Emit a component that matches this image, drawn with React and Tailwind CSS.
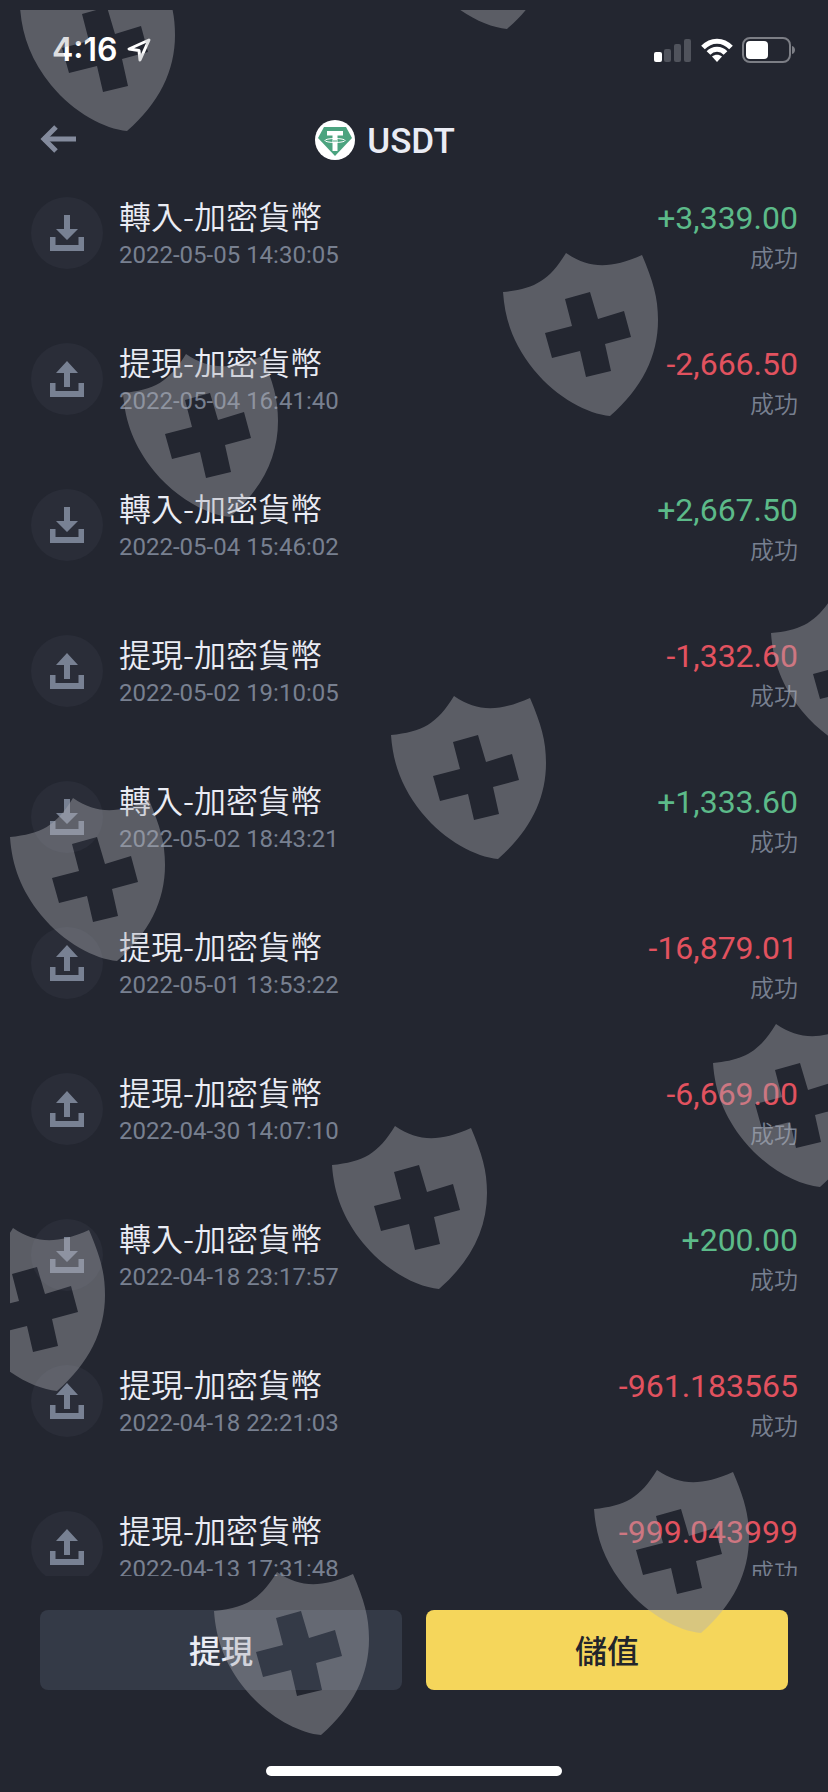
const records = [
  { type: 'in', time: '2022-05-05 14:30:05', amount: '+3,339.00' },
  { type: 'out', time: '2022-05-04 16:41:40', amount: '-2,666.50' },
  { type: 'in', time: '2022-05-04 15:46:02', amount: '+2,667.50' },
  { type: 'out', time: '2022-05-02 19:10:05', amount: '-1,332.60' },
  { type: 'in', time: '2022-05-02 18:43:21', amount: '+1,333.60' },
  { type: 'out', time: '2022-05-01 13:53:22', amount: '-16,879.01' },
  { type: 'out', time: '2022-04-30 14:07:10', amount: '-6,669.00' },
  { type: 'in', time: '2022-04-18 23:17:57', amount: '+200.00' },
  { type: 'out', time: '2022-04-18 22:21:03', amount: '-961.183565' },
  { type: 'out', time: '2022-04-13 17:31:48', amount: '-999.043999' },
];

// Scattered shields, relative to the watermark layer
const shields = [
  { x: 10, y: -42 },
  { x: 390, y: -144 },
  { x: 493, y: 243 },
  { x: 113, y: 344 },
  { x: 761, y: 584 },
  { x: 381, y: 686 },
  { x: 0, y: 788 },
  { x: 703, y: 1014 },
  { x: 322, y: 1116 },
  { x: -60, y: 1218 },
  { x: 584, y: 1460 },
  { x: 204, y: 1562 },
];

function Watermark() {
  return (
    <div className="absolute top-[10px] left-[10px] right-0 bottom-0 overflow-hidden pointer-events-none" aria-hidden="true">
      {shields.map((s, i) => (
        <svg
          key={i}
          className="absolute text-[#afb0b6] opacity-40"
          style={{ left: s.x, top: s.y }}
          width="156"
          height="164"
          viewBox="0 0 156 164"
          fill="currentColor"
        >
          <path
            fillRule="evenodd"
            d="M0 39C31 36 46 28 63 0C87 16 107 16 139 2C150 28 155 44 155 67C155 103 139 135 107 163C85 161 54 145 31 117C11 92 2 68 0 39ZM62 46L69 73L42 80L49 105L77 98L83 124L108 118L102 91L128 84L121 58L95 66L87 39Z"
          />
        </svg>
      ))}
    </div>
  );
}

function StatusBar() {
  return (
    <div className="h-[100px] shrink-0 flex items-start justify-between pt-[30px] pl-[52px] pr-8 text-white">
      <div className="flex items-center gap-2 h-10">
        <span className="font-['Inter'] font-semibold text-[32px] leading-10">4:16</span>
        <svg width="26" height="26" viewBox="0 0 26 26" fill="none" stroke="currentColor" strokeWidth="3" strokeLinejoin="round">
          <path d="M23 3L3 12L13 13.500L14 23Z" />
        </svg>
      </div>
      <div className="flex items-center gap-[9px] h-10">
        <svg width="38" height="24" viewBox="0 0 38 24" fill="currentColor">
          <rect x="0" y="14" width="8" height="10" rx="2" />
          <g fill="#50535c">
            <rect x="10" y="11" width="7" height="13" rx="2" />
            <rect x="20" y="6" width="7" height="18" rx="2" />
            <rect x="30" y="1" width="7" height="23" rx="2" />
          </g>
        </svg>
        <svg width="32" height="24" viewBox="0 0 32 24" fill="none" stroke="currentColor" strokeWidth="5">
          <path d="M2 9.500C10 1 22 1 30 9.500" />
          <path d="M7.500 15C12 10 20 10 24.500 15" />
          <path d="M11 18.500C14 16 18 16 21 18.500L16 24Z" fill="currentColor" stroke="none" />
        </svg>
        <svg width="54" height="26" viewBox="0 0 54 26">
          <rect x="1" y="1" width="47" height="24" rx="7" fill="none" stroke="#7c7e85" strokeWidth="2" />
          <rect x="4" y="4" width="22" height="18" rx="4" fill="currentColor" />
          <path d="M50 9C54 10 54 16 50 17Z" fill="#7c7e85" />
        </svg>
      </div>
    </div>
  );
}

function TetherLogo() {
  return (
    <svg width="40" height="40" viewBox="0 0 40 40">
      <circle cx="20" cy="20" r="20" fill="#fff" />
      <path d="M9 7H31L37 18L20 36L3 18Z" fill="#4ba37f" />
      <path d="M12 11H28V15.500H22.500V31H17.500V15.500H12Z" fill="#fff" />
      <ellipse cx="20" cy="20.500" rx="10" ry="2" fill="none" stroke="#fff" strokeWidth="1" />
      <path d="M18 21H22" stroke="#4ba37f" strokeWidth="1" />
    </svg>
  );
}

function Header() {
  return (
    <header className="h-20 shrink-0 flex items-center pl-10 pr-[134px]">
      <button type="button" aria-label="返回" className="text-[#848b9d]">
        <svg width="36" height="30" viewBox="0 0 36 30" fill="none" stroke="currentColor" strokeWidth="5">
          <path d="M3 14H36" />
          <path d="M16 2L4 14L16 26" />
        </svg>
      </button>
      <div className="flex-1 flex items-center justify-center gap-3">
        <TetherLogo />
        <h1 className="pt-1 font-['Roboto'] font-medium text-[35px] leading-10 text-[#eaecf4]">USDT</h1>
      </div>
    </header>
  );
}

function RecordIcon({ type }) {
  return (
    <svg className="shrink-0" width="72" height="72" viewBox="0 0 72 72" fill="#788193">
      <circle cx="36" cy="36" r="36" fill="#2a2d38" />
      {type === 'in' ? (
        <path d="M33 18H39V32H47L36 43L25 32H33Z" />
      ) : (
        <path d="M36 18L47 30H39V44H33V30H25Z" />
      )}
      <path d="M19 40H24.500V48H47.500V40H53V54H19Z" />
    </svg>
  );
}

function RecordRow({ record }) {
  const isIn = record.type === 'in';
  return (
    <li className="h-[146px] flex items-start gap-4">
      <RecordIcon type={record.type} />
      <div className="flex-1">
        <p className="text-[32px] leading-9 font-[350] text-[#eaecf4]">{isIn ? '轉入' : '提現'}-加密貨幣</p>
        <p className="mt-1.5 font-['Roboto'] text-2xl leading-8 text-[#788090]">{record.time}</p>
      </div>
      <div className="text-right">
        <p className={`font-['Roboto'] text-[32px] leading-[42px] ${isIn ? 'text-[#5cba89]' : 'text-[#e2525f]'}`}>
          {record.amount}
        </p>
        <p className="mt-0.5 text-2xl leading-8 font-[350] text-[#788090]">成功</p>
      </div>
    </li>
  );
}

export default function App() {
  return (
    <div
      lang="zh-Hant"
      className="relative h-screen flex flex-col overflow-hidden bg-[#232630] font-['Noto_Sans_CJK_TC',sans-serif]"
    >
      <StatusBar />
      <Header />

      <ul className="flex-1 min-h-0 overflow-y-auto [scrollbar-width:none] pt-[17px] pl-[31px] pr-[30px]">
        {records.map((record) => (
          <RecordRow key={record.time} record={record} />
        ))}
      </ul>

      {/* Acciones */}
      <footer className="shrink-0 px-10 pt-[34px] pb-4">
        <div className="grid grid-cols-2 gap-6">
          <button type="button" className="h-20 pb-0.5 rounded-lg bg-[#343a47] text-[32px] font-medium text-[#eaecf4]">
            提現
          </button>
          <button type="button" className="h-20 pb-0.5 rounded-lg bg-[#f5d65b] text-[32px] font-medium text-[#22252b]">
            儲值
          </button>
        </div>
        <div className="mx-auto mt-[76px] h-[10px] w-[296px] rounded-full bg-white" />
      </footer>

      <Watermark />
    </div>
  );
}
